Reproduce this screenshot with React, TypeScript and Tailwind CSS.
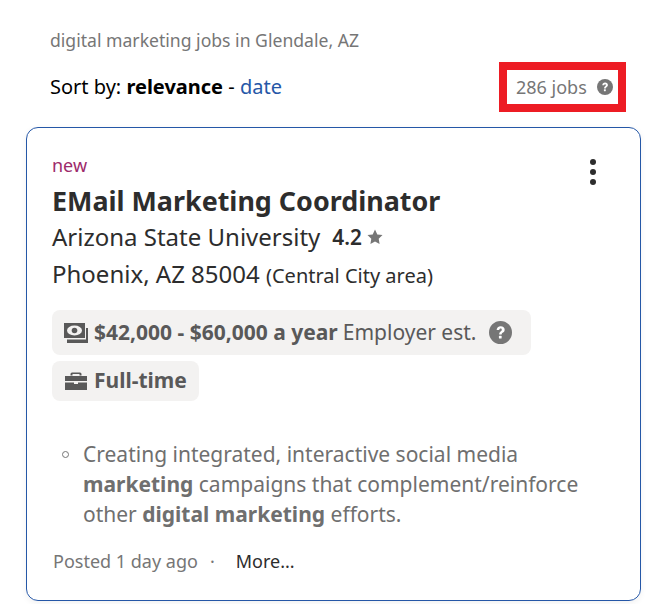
function Help({ size, className }: { size: number; className: string }) {
  return (
    <svg className={className} width={size} height={size} viewBox="0 0 16 16">
      <circle cx="8" cy="8" r="8" fill="#767676" />
      <path d="M5.300 6.200C5.400 4.600 6.500 3.600 8.100 3.600c1.700 0 2.800 1 2.800 2.400 0 1.100-.6 1.700-1.400 2.200-.5.3-.7.6-.7 1.200H7.100c0-1 .3-1.600 1-2.100.5-.4.8-.6.8-1.200 0-.5-.3-.8-.8-.8-.6 0-.9.4-1 .9H5.300z" fill="#fff" />
      <rect x="6.900" y="10.300" width="1.900" height="1.900" rx=".4" fill="#fff" />
    </svg>
  );
}

export default function App() {
  return (
    <div className="w-[668px] h-[604px] bg-white overflow-hidden font-['Noto_Sans',sans-serif] pt-[28px] pl-[26px] relative">
      <div className="pl-6 text-[17.6px] leading-[24px] text-[#767676]">digital marketing jobs in Glendale, AZ</div>
      <div className="flex items-center justify-between w-[600px] pl-6 mt-[10px] h-[50px]">
        <div className="text-[20px] leading-[26px] text-[#000]">
          Sort by: <b className="font-bold">relevance</b> - <span className="text-[#2557a7]">date</span>
        </div>
        <div className="flex items-center w-[127px] h-[50px] border-[8px] border-[#ed1c24] pl-[9px] text-[18px] text-[#767676]">
          <span>286 jobs</span>
          <Help size={16} className="ml-[10px]" />
        </div>
      </div>
      <div className="relative mt-[15px] w-[615px] h-[474px] border border-[#2557a7] rounded-[12px] pt-[25px] pl-[25px] shadow-[0_2px_6px_rgba(0,0,0,0.06)]">
        <div className="text-[18px] leading-[24px] text-[#9d2b6b]">new</div>
        <div className="text-[26.88px] leading-[36px] font-bold text-[#2d2d2d] mt-[6px]">EMail Marketing Coordinator</div>
        <div className="flex items-center text-[24px] leading-[38px] text-[#2d2d2d] h-[36px]">
          <span>Arizona State University</span>
          <span className="ml-[12px] text-[20.8px] font-semibold text-[#2d2d2d]">4.2</span>
          <svg className="ml-[4px]" width="18" height="18" viewBox="0 0 18 18"><path d="M9 1.500l2.300 4.900 5.200.7-3.800 3.700.9 5.300L9 13.500l-4.600 2.600.9-5.300L1.500 7.100l5.200-.7z" fill="#767676" /></svg>
        </div>
        <div className="text-[24px] leading-[38px] text-[#2d2d2d] h-[38px]">
          Phoenix, AZ 85004 <span className="text-[20px]">(Central City area)</span>
        </div>
        <div className="mt-[17px] flex items-center w-[479px] h-[45px] bg-[#f3f2f1] rounded-[8px] pl-[12px] text-[21px] text-[#595959]">
          <svg width="24" height="20" viewBox="0 0 24 20" className="shrink-0">
            <path d="M0 0h21v15H0z" fill="#595959" />
            <ellipse cx="10.500" cy="7.500" rx="7.500" ry="5" fill="#f3f2f1" />
            <circle cx="10.500" cy="7.500" r="2.800" fill="#595959" />
            <path d="M3 16.500h19V5h2v15H3z" fill="#595959" />
          </svg>
          <b className="ml-[6px] font-bold">$42,000 - $60,000 a year</b>
          <span className="ml-[5px]">Employer est.</span>
          <Help size={23} className="ml-[13px]" />
        </div>
        <div className="mt-[6px] flex items-center w-[147px] h-[40px] bg-[#f3f2f1] rounded-[8px] pl-[13px] text-[21px] font-bold text-[#595959]">
          <svg width="22" height="18" viewBox="0 0 22 18" className="shrink-0">
            <path d="M7.500 3.500V2h7v1.500h2V2A1.500 1.500 0 0 0 15 .5H7A1.500 1.500 0 0 0 5.500 2v1.500z" fill="#595959" />
            <path d="M0 4h22v5H0z" fill="#595959" />
            <path d="M0 10.500h9V12h4v-1.500h9V18H0z" fill="#595959" />
          </svg>
          <span className="ml-[7px]">Full-time</span>
        </div>
        <ul className="mt-[38px] pl-[31px] w-[560px] text-[21px] leading-[30px] text-[#6f6f6f] list-none relative">
          <li className="relative">
            <span className="absolute left-[-21px] top-[12px] w-[7px] h-[7px] rounded-full border border-[#767676]" />
            Creating integrated, interactive social media <b>marketing</b> campaigns that complement/reinforce other <b>digital marketing</b> efforts.
          </li>
        </ul>
        <div className="flex items-center mt-[17px] h-[30px] pl-[1px]">
          <span className="text-[18px] text-[#767676]">Posted 1 day ago</span>
          <span className="ml-[12px] text-[18px] text-[#767676]">·</span>
          <span className="ml-[21px] text-[18px] text-[#2d2d2d]">More...</span>
        </div>
        <div className="absolute right-[44px] top-[31px] flex flex-col gap-[4px]">
          <span className="w-[6px] h-[6px] rounded-full bg-[#2d2d2d]" />
          <span className="w-[6px] h-[6px] rounded-full bg-[#2d2d2d]" />
          <span className="w-[6px] h-[6px] rounded-full bg-[#2d2d2d]" />
        </div>
      </div>
    </div>
  );
}
